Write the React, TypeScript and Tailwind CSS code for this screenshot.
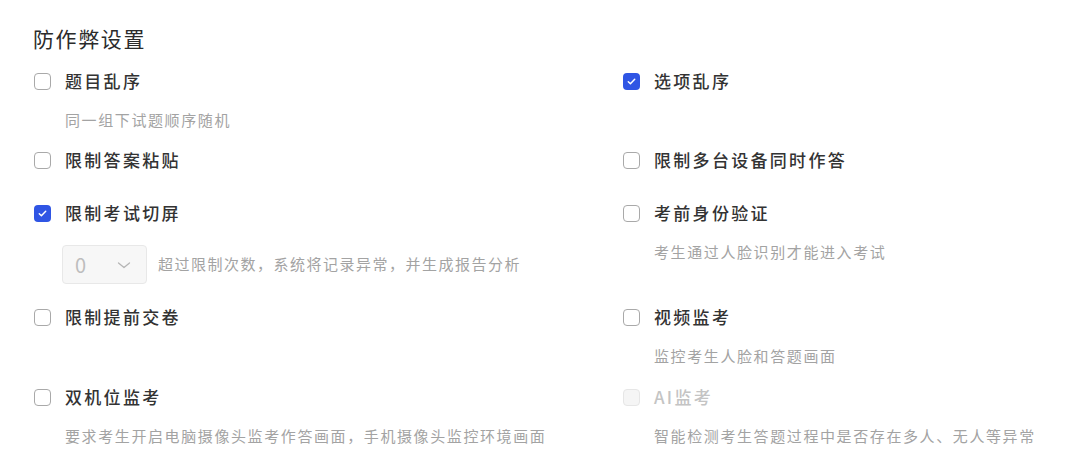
type Item = {
  label: string
  desc?: string
  checked?: boolean
  disabled?: boolean
}

const rows: { left: Item; right: Item; cls: string; select?: boolean }[] = [
  {
    left: { label: "题目乱序", desc: "同一组下试题顺序随机" },
    right: { label: "选项乱序", checked: true },
    cls: "h-[79px]",
  },
  {
    left: { label: "限制答案粘贴" },
    right: { label: "限制多台设备同时作答" },
    cls: "h-[53px]",
  },
  {
    left: { label: "限制考试切屏", checked: true },
    right: { label: "考前身份验证", desc: "考生通过人脸识别才能进入考试" },
    cls: "h-[104px]",
    select: true,
  },
  {
    left: { label: "限制提前交卷" },
    right: { label: "视频监考", desc: "监控考生人脸和答题画面" },
    cls: "h-[80px]",
  },
  {
    left: { label: "双机位监考", desc: "要求考生开启电脑摄像头监考作答画面，手机摄像头监控环境画面" },
    right: { label: "AI监考", desc: "智能检测考生答题过程中是否存在多人、无人等异常", disabled: true },
    cls: "h-[81px]",
  },
]

function Box({ checked, disabled }: { checked?: boolean; disabled?: boolean }) {
  if (checked) {
    return (
      <span className="flex h-[17px] w-[17px] shrink-0 items-center justify-center rounded-[4px] bg-[#2f55e4]">
        <svg width="11" height="11" viewBox="0 0 12 12" fill="none">
          <path d="M2.5 6.2l2.3 2.3 4.7-4.9" stroke="white" strokeWidth="1.6" strokeLinecap="round" strokeLinejoin="round" />
        </svg>
      </span>
    )
  }
  return (
    <span
      className={
        disabled
          ? "h-[17px] w-[17px] shrink-0 rounded-[4px] border border-[#e6e6e6] bg-[#f5f5f5]"
          : "h-[17px] w-[17px] shrink-0 rounded-[4px] border-[1.5px] border-[#a9a9a9] bg-white"
      }
    />
  )
}

function Option({ item, select }: { item: Item; select?: boolean }) {
  return (
    <div>
      <div className="flex h-6 items-center">
        <Box checked={item.checked} disabled={item.disabled} />
        <span
          className={`ml-[14px] text-[17px] font-medium leading-6 tracking-[2.3px] ${
            item.disabled ? "text-[#c4c4c4]" : "text-[#333]"
          }`}
        >
          {item.label}
        </span>
      </div>
      {item.desc && (
        <p className="ml-[31px] mt-[15px] text-[15px] leading-6 tracking-[1.6px] text-[#a3a3a3]">{item.desc}</p>
      )}
      {select && (
        <div className="ml-[28px] mt-5 flex items-center">
          <div className="flex h-[39px] w-[85px] shrink-0 items-center justify-between rounded-[4px] border border-[#e8e8e8] bg-[#f7f7f7] pl-3 pr-[14px]">
            <span className="text-[20px] text-[#bdbdbd]">0</span>
            <svg width="16" height="16" viewBox="0 0 16 16" fill="none">
              <path d="M2.5 6l5.5 4.5 5.5-4.5" stroke="#b5b5b5" strokeWidth="1.3" strokeLinecap="round" strokeLinejoin="round" />
            </svg>
          </div>
          <span className="ml-[11px] text-[15px] tracking-[1.5px] text-[#a3a3a3]">
            超过限制次数，系统将记录异常，并生成报告分析
          </span>
        </div>
      )}
    </div>
  )
}

export default function App() {
  return (
    <div
      className="h-[466px] w-[1080px] bg-white pl-[34px] pt-6"
      style={{ fontFamily: '"Noto Sans CJK SC", "Noto Sans", sans-serif' }}
    >
      <h2 className="-ml-px text-[21px] leading-7 tracking-[1.6px] text-[#2b2b2b]">防作弊设置</h2>
      <div className="mt-[17px]">
        {rows.map((r, i) => (
          <div key={i} className={`grid grid-cols-[589px_1fr] ${r.cls}`}>
            <Option item={r.left} select={r.select} />
            <Option item={r.right} />
          </div>
        ))}
      </div>
    </div>
  )
}
